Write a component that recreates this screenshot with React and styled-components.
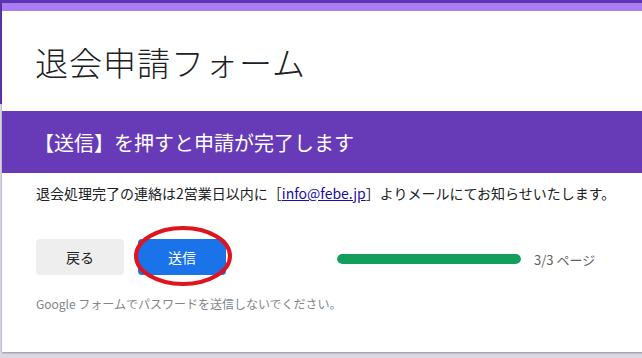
import styled, { createGlobalStyle } from "styled-components";

const GlobalStyle = createGlobalStyle`
  html, body {
    margin: 0;
    padding: 0;
    overflow: hidden;
  }
  body {
    font-family: Roboto, Arial, "Noto Sans CJK JP", sans-serif;
    color: #202124;
  }
`;

const Page = styled.div`
  width: 642px;
  height: 358px;
  overflow: hidden;
  padding: 3px 0 0 2px;
  box-sizing: border-box;
  background: linear-gradient(to bottom, #5e35b1 0, #5e35b1 104px, #dcd8e4 104px);
`;

const Card = styled.div`
  width: 680px;
  background: #fff;
  border-top: 8px solid #a97ef5;
  box-shadow: 0 1px 2px rgba(0, 0, 0, 0.35);
`;

const TitleBlock = styled.div`
  height: 100px;
  display: flex;
  align-items: center;
  padding-left: 33px;
  padding-top: 2px;
  box-sizing: border-box;
`;

const Title = styled.h1`
  margin: 0;
  font-family: "Noto Sans CJK JP", sans-serif;
  font-weight: 300;
  font-size: 33px;
  letter-spacing: 1px;
  color: #202124;
`;

const SectionBand = styled.div`
  height: 62px;
  background: #673ab7;
  display: flex;
  align-items: center;
  padding-left: 32px;
  box-sizing: border-box;
`;

const SectionTitle = styled.h2`
  margin: 0;
  font-family: "Noto Sans CJK JP", sans-serif;
  font-weight: 400;
  font-size: 20px;
  color: #fff;
`;

const Body = styled.div`
  padding: 10px 0 40px 34px;
`;

const Description = styled.p`
  margin: 0;
  font-family: "Noto Sans CJK JP", sans-serif;
  font-size: 14px;
  line-height: 20px;
  color: #202124;

  a {
    color: #1a0dab;
    text-decoration: underline;
  }
`;

const ActionRow = styled.div`
  display: flex;
  align-items: center;
  margin-top: 36px;
`;

const Buttons = styled.div`
  display: flex;
  gap: 14px;
`;

const ButtonWrap = styled.div`
  position: relative;
`;

const Button = styled.button`
  width: 88px;
  height: 36px;
  border: none;
  border-radius: 4px;
  font-family: "Noto Sans CJK JP", sans-serif;
  font-size: 14px;
  background: ${(p) => (p.$primary ? "#1a73e8" : "#eeeeee")};
  color: ${(p) => (p.$primary ? "#fff" : "#202124")};
  padding: 0;
`;

const Circle = styled.svg`
  position: absolute;
  left: -5px;
  top: -14px;
  pointer-events: none;
`;

const Progress = styled.div`
  display: flex;
  align-items: center;
  margin-left: 111px;
  margin-top: 4px;
`;

const Track = styled.div`
  width: 184px;
  height: 10px;
  border-radius: 5px;
  background: #e0e0e0;
  overflow: hidden;
`;

const Fill = styled.div`
  height: 100%;
  background: #129e5b;
  border-radius: 5px;
`;

const PageCount = styled.span`
  margin-left: 13px;
  font-family: "Noto Sans CJK JP", sans-serif;
  font-size: 13px;
  color: #5f6368;
`;

const Footer = styled.p`
  margin: 21px 0 0;
  font-family: "Noto Sans CJK JP", sans-serif;
  font-size: 12px;
  line-height: 16px;
  color: #80868b;
`;

export default function App() {
  const page = 3;
  const total = 3;
  return (
    <>
      <GlobalStyle />
      <Page>
        <Card>
          <TitleBlock>
            <Title>退会申請フォーム</Title>
          </TitleBlock>
          <SectionBand>
            <SectionTitle>【送信】を押すと申請が完了します</SectionTitle>
          </SectionBand>
          <Body>
            <Description>
              退会処理完了の連絡は2営業日以内に［<a href="#">info@febe.jp</a>］よりメールにてお知らせいたします。
            </Description>
            <ActionRow>
              <Buttons>
                <Button>戻る</Button>
                <ButtonWrap>
                  <Button $primary>送信</Button>
                  <Circle width="100" height="62" viewBox="0 0 100 62">
                    <ellipse cx="50" cy="31" rx="47" ry="28" fill="none" stroke="#e0141e" strokeWidth="4" />
                  </Circle>
                </ButtonWrap>
              </Buttons>
              <Progress>
                <Track>
                  <Fill style={{ width: `${(page / total) * 100}%` }} />
                </Track>
                <PageCount>
                  {page}/{total} ページ
                </PageCount>
              </Progress>
            </ActionRow>
            <Footer>Google フォームでパスワードを送信しないでください。</Footer>
          </Body>
        </Card>
      </Page>
    </>
  );
}
